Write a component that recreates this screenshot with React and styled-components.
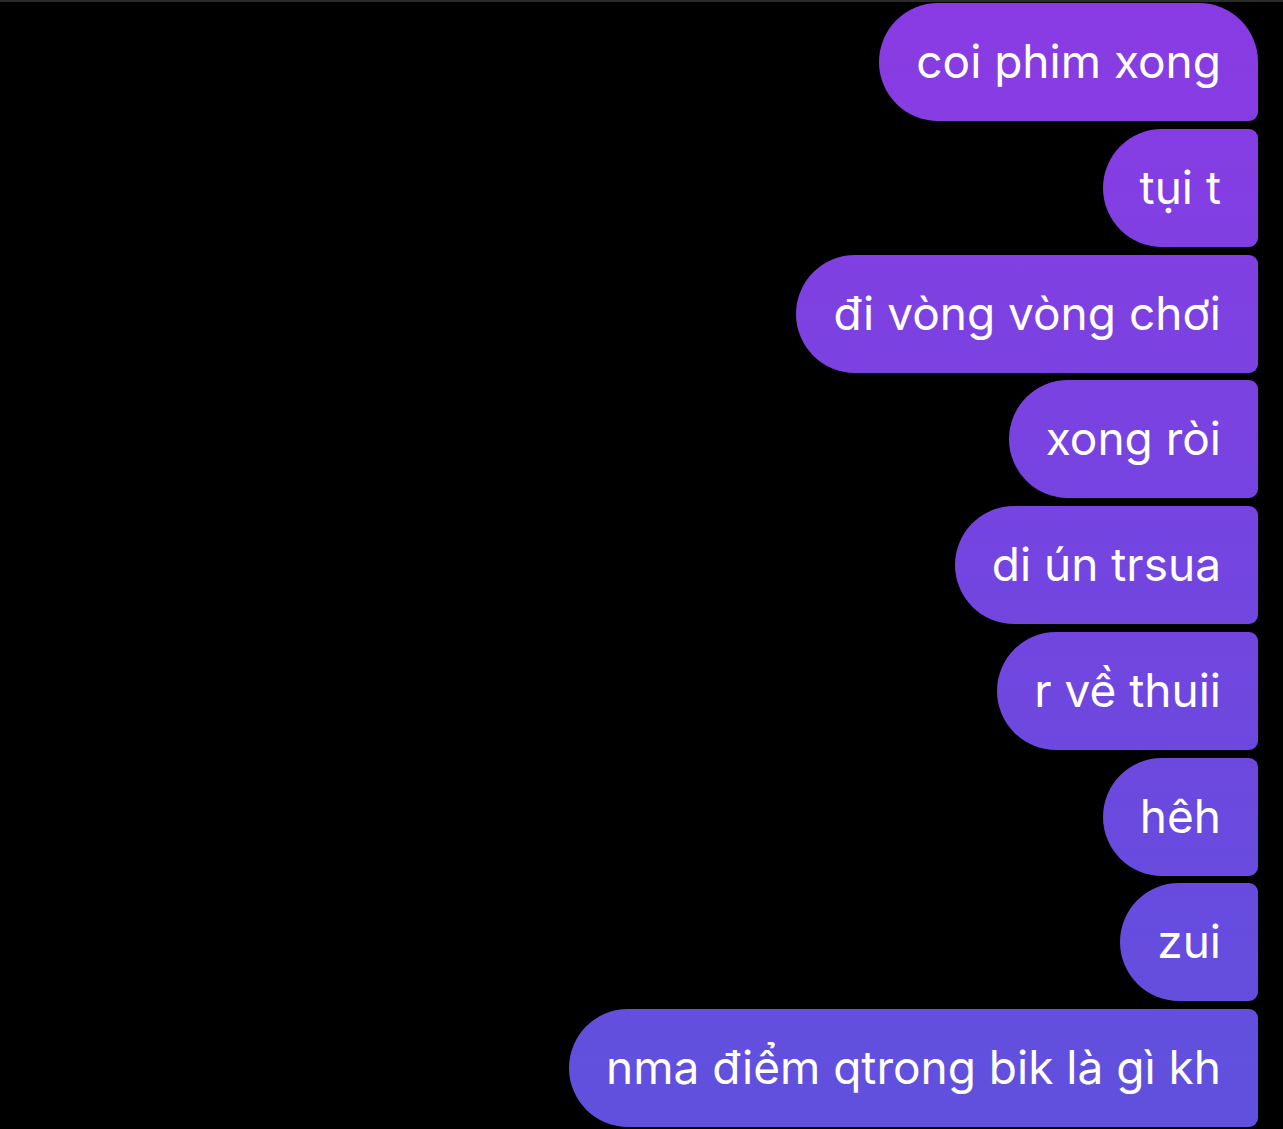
import styled, { createGlobalStyle } from 'styled-components'

const GlobalStyle = createGlobalStyle`
  html, body {
    margin: 0;
    padding: 0;
    background: #000000;
  }
  body {
    font-family: Inter, "Noto Sans", "Liberation Sans", sans-serif;
  }
`

const Screen = styled.main`
  min-height: 1129px;
  background: #000000;
  border-top: 2px solid #2a2a2a;
  box-sizing: border-box;
  overflow: hidden;
`

const Thread = styled.div`
  display: flex;
  flex-direction: column;
  align-items: flex-end;
  gap: 7.75px;
  padding: 1px 25px 0 0;
`

const Bubble = styled.div`
  height: 118px;
  box-sizing: border-box;
  display: flex;
  align-items: center;
  padding: 0 37px 2px;
  color: #ffffff;
  font-size: 46px;
  white-space: nowrap;
  border-radius: ${(p) => (p.$first ? '59px 59px 9px 59px' : '59px 9px 9px 59px')};
  background: linear-gradient(180deg, #8a3be3 0px, #7a42e1 400px, #6d48df 750px, #5f51dd 1129px);
  background-attachment: fixed;
`

const messages = [
  'coi phim xong',
  'tụi t',
  'đi vòng vòng chơi',
  'xong ròi',
  'di ún trsua',
  'r về thuii',
  'hêh',
  'zui',
  'nma điểm qtrong bik là gì kh',
]

export default function App() {
  return (
    <>
      <GlobalStyle />
      <Screen>
        <Thread>
          {messages.map((text, i) => (
            <Bubble key={i} $first={i === 0}>
              {text}
            </Bubble>
          ))}
        </Thread>
      </Screen>
    </>
  )
}
